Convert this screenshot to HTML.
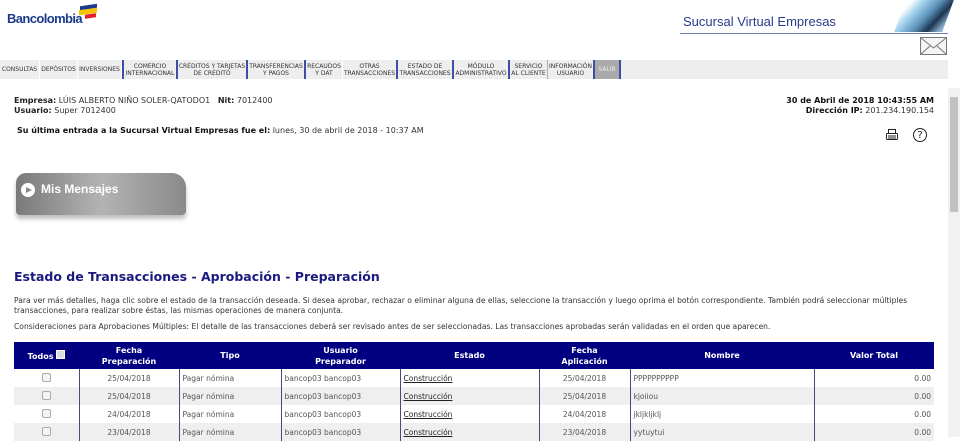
<!DOCTYPE html>
<html><head><meta charset="utf-8"><style>
*{margin:0;padding:0;box-sizing:border-box}
body{width:960px;height:437px;overflow:hidden;background:#fff;font-family:"DejaVu Sans","Liberation Sans",sans-serif;font-size:8px;color:#333;position:relative}
.a{position:absolute}
.tabs{left:0;top:60px;width:948px;height:19px;background:#eee;}
.tab{position:absolute;top:0;height:19px;border-right:1px solid #fff;font-size:6px;line-height:7px;text-align:center;color:#333;display:flex;align-items:center;justify-content:center}
.bl{border-left:2px solid #3b4fa8}
table{border-collapse:collapse;position:absolute;left:14px;top:342px;width:920px;font-size:7.5px}
th{background:#000080;color:#fff;font-weight:bold;font-size:8px;height:27px;line-height:11px}
td{height:18px;border-left:1px solid #4a4a7a;color:#555;padding:0 3px}
td:first-child{border-left:none}
tr.g td{background:#efefef}
.cb{display:inline-block;width:9px;height:9px;border:1px solid #aaa;border-radius:2px;background:#f4f4f4}
</style></head><body>
<div class="a" style="left:7px;top:11px;font-family:'Liberation Sans',sans-serif;font-weight:bold;font-size:13px;color:#1a3a8a;letter-spacing:-0.6px">Bancolombia</div>
<div class="a" style="left:80px;top:5px;width:17px;height:4px;background:#1a3a8a;transform:skewY(-8deg)"></div>
<div class="a" style="left:79px;top:9px;width:18px;height:5px;background:#f5c400;transform:skewY(-8deg)"></div>
<div class="a" style="left:85px;top:14px;width:11px;height:4px;background:#e5202e;transform:skewY(-8deg)"></div>
<div class="a" style="left:683px;top:14px;font-family:'Liberation Sans',sans-serif;font-size:13px;color:#2a3a8a">Sucursal Virtual Empresas</div>
<div class="a" style="left:680px;top:33px;width:268px;height:1px;background:#6c7fb8"></div>
<div class="a" style="left:900px;top:0;width:48px;height:32px;background:linear-gradient(120deg,#fff 10%,#9fd0ec 30%,#5a8fb8 55%,#1d3550 75%,#8fb5d5 95%);transform:skewX(-20deg)"></div>
<svg class="a" style="left:920px;top:37px" width="27" height="18"><rect x="0.5" y="0.5" width="26" height="17" fill="#f4f4f4" stroke="#777"/><path d="M1 1 L13.5 11 L26 1 M1 17 L10 9 M26 17 L17 9" stroke="#777" fill="none"/></svg>
<div class="a tabs">
<div class="tab" style="left:0;width:40px">CONSULTAS</div>
<div class="tab" style="left:40px;width:38px">DEPÓSITOS</div>
<div class="tab" style="left:78px;width:44px">INVERSIONES</div>
<div class="tab bl" style="left:122px;width:55px">COMERCIO<br>INTERNACIONAL</div>
<div class="tab bl" style="left:176px;width:71px">CRÉDITOS Y TARJETAS<br>DE CRÉDITO</div>
<div class="tab bl" style="left:246px;width:59px">TRANSFERENCIAS<br>Y PAGOS</div>
<div class="tab bl" style="left:304px;width:39px">RECAUDOS<br>Y DAT</div>
<div class="tab" style="left:343px;width:54px">OTRAS<br>TRANSACCIONES</div>
<div class="tab bl" style="left:396px;width:57px">ESTADO DE<br>TRANSACCIONES</div>
<div class="tab bl" style="left:452px;width:57px">MÓDULO<br>ADMINISTRATIVO</div>
<div class="tab bl" style="left:508px;width:40px">SERVICIO<br>AL CLIENTE</div>
<div class="tab" style="left:547px;width:47px;border-left:1px solid #aab">INFORMACIÓN<br>USUARIO</div>
<div class="tab bl" style="left:593px;width:28px;background:#aaa;color:#eee;border-right:2px solid #3b4fa8">SALIR</div>
</div>
<div class="a" style="left:948px;top:88px;width:12px;height:349px;background:#f1f1f1"></div>
<div class="a" style="left:950px;top:97px;width:8px;height:115px;background:#c1c1c1"></div>
<div class="a" style="left:14px;top:96px;line-height:10px"><b style="color:#222">Empresa:</b> LÚIS ALBERTO NIÑO SOLER-QATODO1 &nbsp;&nbsp;<b style="color:#222">Nit:</b> 7012400<br><b style="color:#222">Usuario:</b> Super 7012400</div>
<div class="a" style="left:17px;top:126px"><b style="color:#111">Su última entrada a la Sucursal Virtual Empresas fue el:</b> lunes, 30 de abril de 2018 - 10:37 AM</div>
<div class="a" style="right:26px;top:96px;line-height:10px;text-align:right"><b style="color:#111">30 de Abril de 2018 10:43:55 AM</b><br><b style="color:#111">Dirección IP:</b> 201.234.190.154</div>
<svg class="a" style="left:885px;top:128px" width="14" height="14"><rect x="3.5" y="1.5" width="7" height="4" fill="#fff" stroke="#222"/><rect x="1.5" y="5.5" width="11" height="6" rx="1" fill="#fff" stroke="#222"/><path d="M3 8h8M3 10h8" stroke="#222"/></svg>
<div class="a" style="left:913px;top:128px;width:14px;height:14px;border:1px solid #222;border-radius:50%;font-size:10px;text-align:center;line-height:13px;color:#222">?</div>
<div class="a" style="left:16px;top:173px;width:170px;height:42px;border-radius:10px 14px 4px 4px;background:linear-gradient(90deg,#7a7a7a,#b3b3b3 50%,#8a8a8a);box-shadow:0 4px 4px rgba(0,0,0,.25)"></div>
<div class="a" style="left:21px;top:183px;width:14px;height:14px;border-radius:50%;background:#fff"></div>
<div class="a" style="left:26px;top:187px;width:0;height:0;border-left:6px solid #888;border-top:3.5px solid transparent;border-bottom:3.5px solid transparent"></div>
<div class="a" style="left:41px;top:182px;font-family:'Liberation Sans',sans-serif;font-weight:bold;font-size:12px;color:#fff">Mis Mensajes</div>
<div class="a" style="left:14px;top:269px;font-size:12.5px;font-weight:bold;color:#1a1a80">Estado de Transacciones - Aprobación - Preparación</div>
<div class="a" style="left:14px;top:296px;width:930px;line-height:10px;font-size:7.6px">Para ver más detalles, haga clic sobre el estado de la transacción deseada. Si desea aprobar, rechazar o eliminar alguna de ellas, seleccione la transacción y luego oprima el botón correspondiente. También podrá seleccionar múltiples transacciones, para realizar sobre éstas, las mismas operaciones de manera conjunta.</div>
<div class="a" style="left:14px;top:322px;font-size:7.6px">Consideraciones para Aprobaciones Múltiples: El detalle de las transacciones deberá ser revisado antes de ser seleccionadas. Las transacciones aprobadas serán validadas en el orden que aparecen.</div>
<table>
<tr><th style="width:65px">Todos <span class="cb" style="background:#ddd;border-color:#fff;border-radius:0"></span></th><th style="width:100px">Fecha<br>Preparación</th><th style="width:102px">Tipo</th><th style="width:119px">Usuario<br>Preparador</th><th style="width:139px">Estado</th><th style="width:91px">Fecha<br>Aplicación</th><th style="width:184px">Nombre</th><th>Valor Total</th></tr>
<tr><td align="center"><span class="cb"></span></td><td align="center">25/04/2018</td><td>Pagar nómina</td><td>bancop03 bancop03</td><td><u style="color:#222">Construcción</u></td><td align="center">25/04/2018</td><td>PPPPPPPPPP</td><td align="right">0.00</td></tr>
<tr class="g"><td align="center"><span class="cb"></span></td><td align="center">25/04/2018</td><td>Pagar nómina</td><td>bancop03 bancop03</td><td><u style="color:#222">Construcción</u></td><td align="center">25/04/2018</td><td>kjoiiou</td><td align="right">0.00</td></tr>
<tr><td align="center"><span class="cb"></span></td><td align="center">24/04/2018</td><td>Pagar nómina</td><td>bancop03 bancop03</td><td><u style="color:#222">Construcción</u></td><td align="center">24/04/2018</td><td>jkljkljklj</td><td align="right">0.00</td></tr>
<tr class="g"><td align="center"><span class="cb"></span></td><td align="center">23/04/2018</td><td>Pagar nómina</td><td>bancop03 bancop03</td><td><u style="color:#222">Construcción</u></td><td align="center">23/04/2018</td><td>yytuytui</td><td align="right">0.00</td></tr>
</table>
</body></html>
